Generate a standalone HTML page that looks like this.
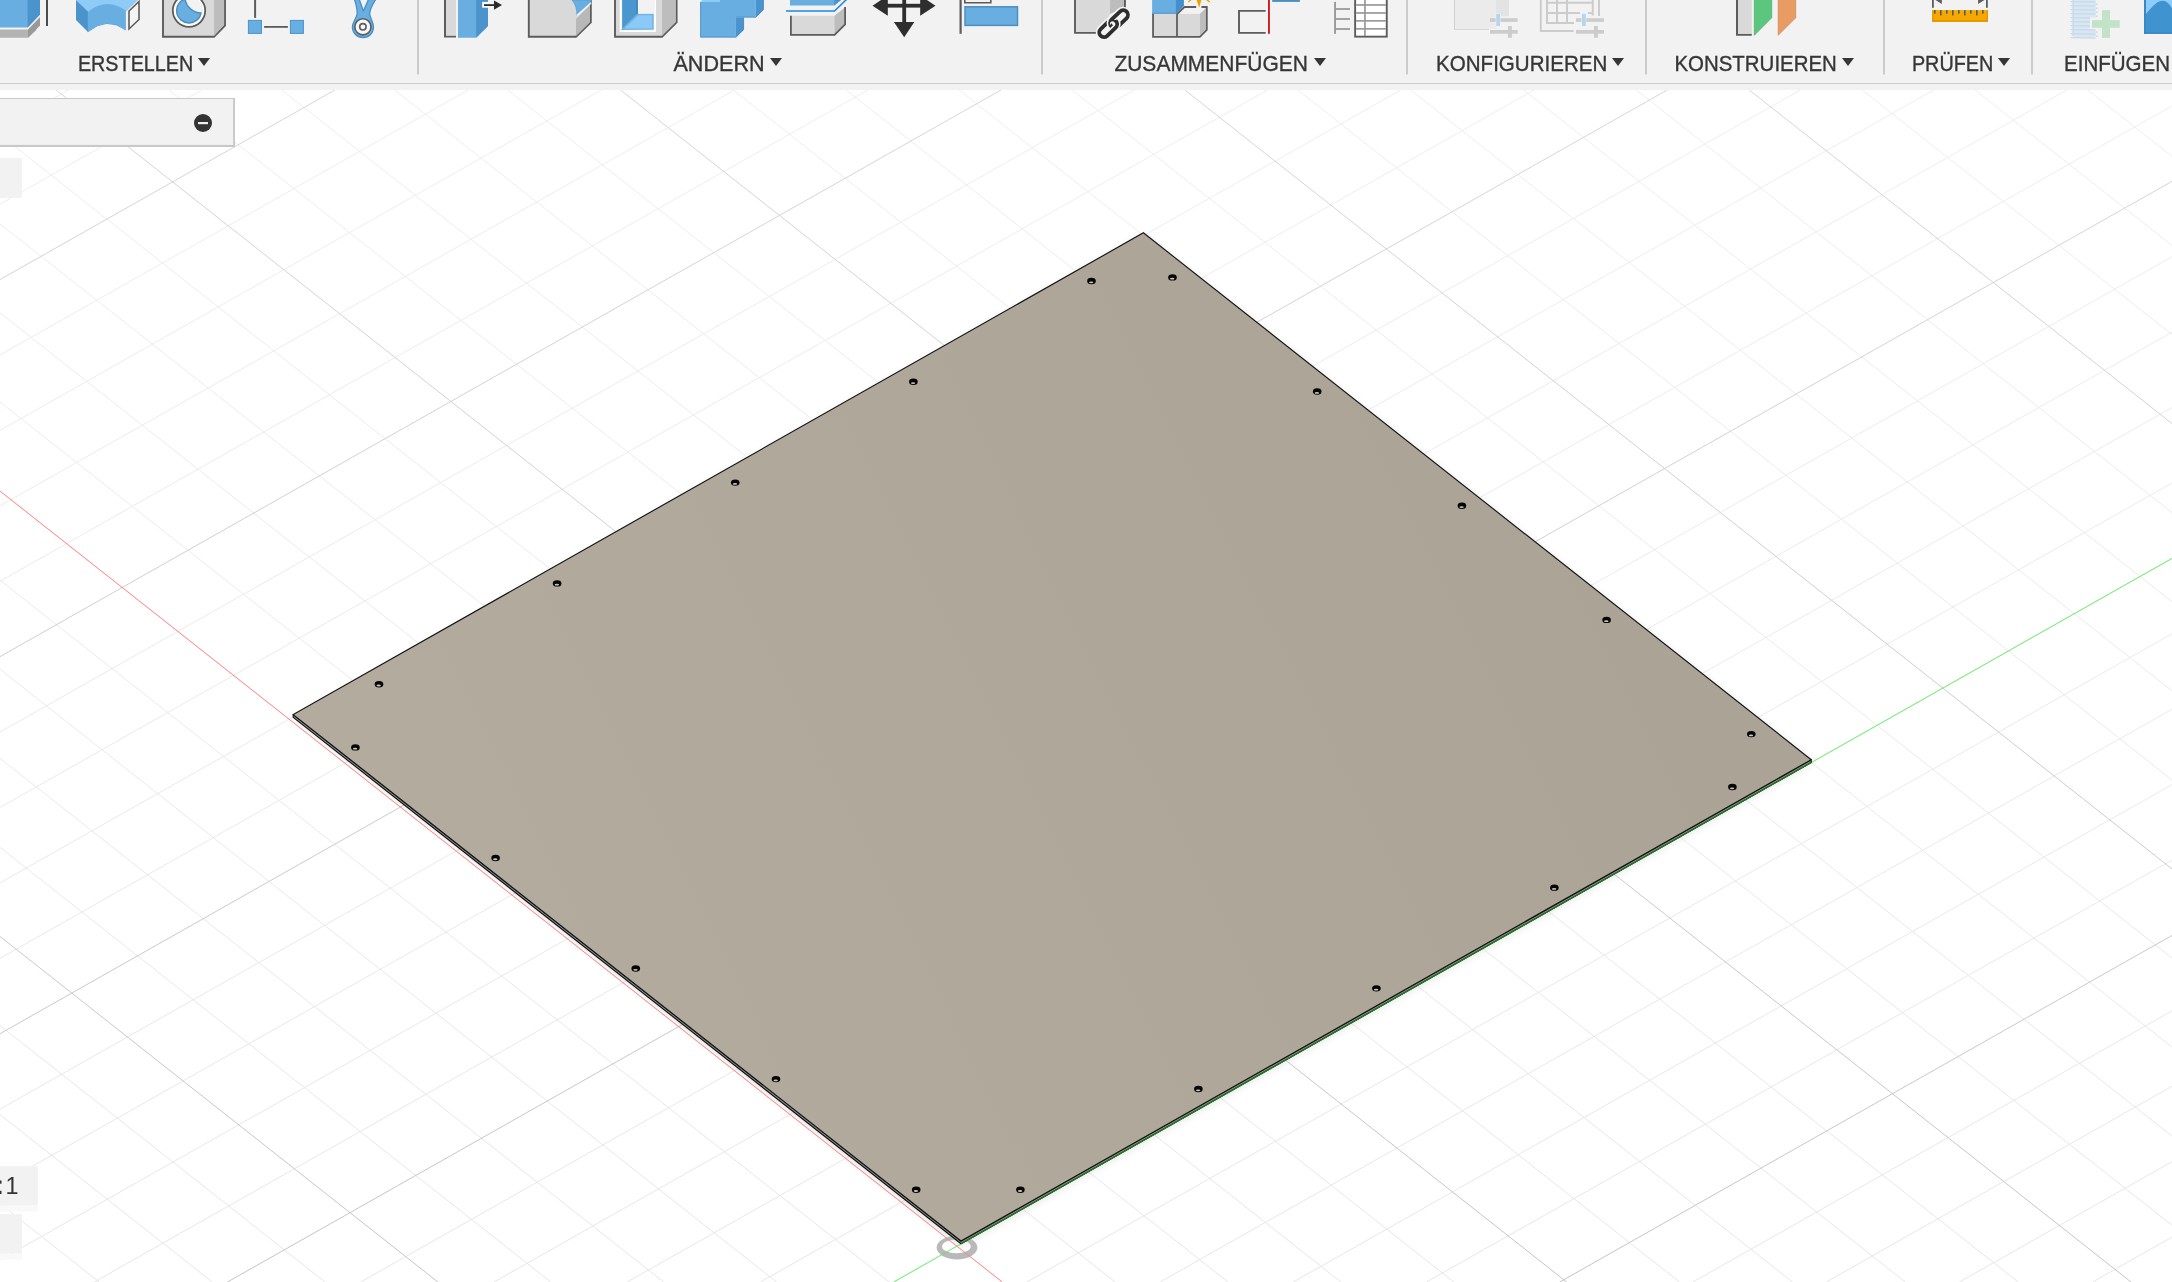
<!DOCTYPE html><html><head><meta charset="utf-8"><title>Fusion</title><style>html,body{margin:0;padding:0;width:2172px;height:1282px;overflow:hidden;background:#fff;font-family:"Liberation Sans",sans-serif}</style></head><body><svg width="2172" height="1282" viewBox="0 0 2172 1282" style="position:absolute;left:0;top:0;display:block"><defs><linearGradient id="plateg" gradientUnits="userSpaceOnUse" x1="500" y1="1000" x2="1600" y2="450"><stop offset="0" stop-color="#b3ab9e"/><stop offset="0.5" stop-color="#afa799"/><stop offset="1" stop-color="#aba395"/></linearGradient><linearGradient id="gminor" gradientUnits="userSpaceOnUse" x1="0" y1="90" x2="0" y2="1282"><stop offset="0" stop-color="#eeeeee"/><stop offset="1" stop-color="#e6e6e6"/></linearGradient><linearGradient id="gmajor" gradientUnits="userSpaceOnUse" x1="0" y1="90" x2="0" y2="1282"><stop offset="0" stop-color="#d6d6d6"/><stop offset="1" stop-color="#c4c4c4"/></linearGradient><filter id="ringblur" x="-20%" y="-40%" width="140%" height="180%"><feGaussianBlur stdDeviation="0.6"/></filter><filter id="blur1" x="-10%" y="-10%" width="120%" height="120%"><feGaussianBlur stdDeviation="1.2"/></filter><filter id="blur" x="-10%" y="-10%" width="120%" height="120%"><feGaussianBlur stdDeviation="4"/></filter></defs><rect x="0" y="0" width="2172" height="1282" fill="#ffffff"/><path d="M0.00 1203.67L99.26 1282.00 M-0.00 1114.59L212.14 1282.00 M0.00 1025.52L325.01 1282.00 M0.00 847.37L550.76 1282.00 M0.00 758.30L663.64 1282.00 M0.00 669.22L776.51 1282.00 M0.00 580.15L889.39 1282.00 M0.00 402.00L1115.14 1282.00 M0.00 312.92L1228.02 1282.00 M0.00 223.85L1340.89 1282.00 M0.00 134.77L1453.77 1282.00 M169.01 90.00L1679.52 1282.00 M281.89 90.00L1792.40 1282.00 M394.76 90.00L1905.27 1282.00 M507.64 90.00L2018.15 1282.00 M733.39 90.00L2172.00 1225.26 M846.27 90.00L2172.00 1136.19 M959.14 90.00L2172.00 1047.11 M1072.02 90.00L2172.00 958.04 M1297.77 90.00L2172.00 779.89 M1410.64 90.00L2172.00 690.82 M1523.52 90.00L2172.00 601.74 M1636.39 90.00L2172.00 512.67 M1862.15 90.00L2172.00 334.52 M1975.02 90.00L2172.00 245.44 M2087.90 90.00L2172.00 156.37 M0.00 128.75L68.46 90.00 M0.00 204.17L201.69 90.00 M0.00 354.99L468.14 90.00 M0.00 430.41L601.37 90.00 M0.00 505.82L734.59 90.00 M0.00 581.24L867.82 90.00 M0.00 732.07L1134.27 90.00 M0.00 807.48L1267.50 90.00 M0.00 882.89L1400.72 90.00 M0.00 958.31L1533.95 90.00 M0.00 1109.14L1800.40 90.00 M0.00 1184.55L1933.63 90.00 M0.00 1259.96L2066.85 90.00 M94.30 1282.00L2172.00 105.90 M360.75 1282.00L2172.00 256.72 M493.98 1282.00L2172.00 332.14 M627.20 1282.00L2172.00 407.55 M760.43 1282.00L2172.00 482.97 M1026.88 1282.00L2172.00 633.79 M1160.11 1282.00L2172.00 709.21 M1293.33 1282.00L2172.00 784.62 M1426.56 1282.00L2172.00 860.04 M1693.01 1282.00L2172.00 1010.87 M1826.24 1282.00L2172.00 1086.28 M1959.47 1282.00L2172.00 1161.69 M2092.69 1282.00L2172.00 1237.11" stroke="url(#gminor)" stroke-width="1" fill="none"/><path d="M0.00 936.45L437.89 1282.00 M56.14 90.00L1566.64 1282.00 M620.51 90.00L2131.02 1282.00 M1184.89 90.00L2172.00 868.96 M1749.27 90.00L2172.00 423.59 M0.00 279.58L334.91 90.00 M0.00 656.65L1001.04 90.00 M0.00 1033.72L1667.18 90.00 M227.52 1282.00L2172.00 181.31 M1559.79 1282.00L2172.00 935.45" stroke="url(#gmajor)" stroke-width="1" fill="none"/><line x1="-0.00" y1="491.07" x2="1002.27" y2="1282.00" stroke="#ff7070" stroke-opacity="0.55" stroke-width="1"/><line x1="893.66" y1="1282.00" x2="2172.00" y2="558.38" stroke="#50e850" stroke-opacity="0.55" stroke-width="1"/><polygon points="295.20,717.60 961.00,1246.00 1813.20,762.70 1143.40,234.80" fill="#000" opacity="0.10" filter="url(#blur)"/><polygon points="292.20,716.60 960.00,1244.00 964.00,1249.00 296.20,721.60" fill="#000" opacity="0.06" filter="url(#blur1)"/><path d="M936.6,1247.6 A20.4,11.8 0 1 0 977.4,1247.6 A20.4,11.8 0 1 0 936.6,1247.6 Z M942.1,1246.4 A14.3,6.9 0 1 1 970.7,1246.4 A14.3,6.9 0 1 1 942.1,1246.4 Z" fill="#b9b9b9" fill-rule="evenodd" filter="url(#ringblur)"/><line x1="-0.00" y1="491.07" x2="1002.27" y2="1282.00" stroke="#ff7070" stroke-opacity="0.55" stroke-width="1"/><line x1="893.66" y1="1282.00" x2="2172.00" y2="558.38" stroke="#50e850" stroke-opacity="0.55" stroke-width="1"/><polygon points="293.20,714.60 961.00,1241.00 1811.20,759.70 1811.20,762.50 961.00,1243.80 293.20,717.40" fill="#8a8a8a" stroke="#111" stroke-width="1.1" stroke-linejoin="round"/><line x1="961.00" y1="1243.80" x2="1811.20" y2="762.50" stroke="#1f7f1f" stroke-width="1.2"/><polygon points="1143.40,232.80 1811.20,759.70 961.00,1241.00 293.20,714.60" fill="url(#plateg)" stroke="#141414" stroke-width="1.15" stroke-linejoin="miter"/><ellipse cx="1091.50" cy="281.00" rx="4.3" ry="3.2" fill="#050505"/><ellipse cx="1091.20" cy="282.30" rx="2.2" ry="0.9" fill="#c9c6c0"/><ellipse cx="913.38" cy="381.80" rx="4.3" ry="3.2" fill="#050505"/><ellipse cx="913.08" cy="383.10" rx="2.2" ry="0.9" fill="#c9c6c0"/><ellipse cx="735.25" cy="482.60" rx="4.3" ry="3.2" fill="#050505"/><ellipse cx="734.95" cy="483.90" rx="2.2" ry="0.9" fill="#c9c6c0"/><ellipse cx="557.12" cy="583.40" rx="4.3" ry="3.2" fill="#050505"/><ellipse cx="556.83" cy="584.70" rx="2.2" ry="0.9" fill="#c9c6c0"/><ellipse cx="379.00" cy="684.20" rx="4.3" ry="3.2" fill="#050505"/><ellipse cx="378.70" cy="685.50" rx="2.2" ry="0.9" fill="#c9c6c0"/><ellipse cx="1172.50" cy="277.40" rx="4.3" ry="3.2" fill="#050505"/><ellipse cx="1172.20" cy="278.70" rx="2.2" ry="0.9" fill="#c9c6c0"/><ellipse cx="1317.20" cy="391.57" rx="4.3" ry="3.2" fill="#050505"/><ellipse cx="1316.90" cy="392.88" rx="2.2" ry="0.9" fill="#c9c6c0"/><ellipse cx="1461.90" cy="505.75" rx="4.3" ry="3.2" fill="#050505"/><ellipse cx="1461.60" cy="507.05" rx="2.2" ry="0.9" fill="#c9c6c0"/><ellipse cx="1606.60" cy="619.92" rx="4.3" ry="3.2" fill="#050505"/><ellipse cx="1606.30" cy="621.22" rx="2.2" ry="0.9" fill="#c9c6c0"/><ellipse cx="1751.30" cy="734.10" rx="4.3" ry="3.2" fill="#050505"/><ellipse cx="1751.00" cy="735.40" rx="2.2" ry="0.9" fill="#c9c6c0"/><ellipse cx="355.40" cy="747.40" rx="4.3" ry="3.2" fill="#050505"/><ellipse cx="355.10" cy="748.70" rx="2.2" ry="0.9" fill="#c9c6c0"/><ellipse cx="495.60" cy="857.98" rx="4.3" ry="3.2" fill="#050505"/><ellipse cx="495.30" cy="859.27" rx="2.2" ry="0.9" fill="#c9c6c0"/><ellipse cx="635.80" cy="968.55" rx="4.3" ry="3.2" fill="#050505"/><ellipse cx="635.50" cy="969.85" rx="2.2" ry="0.9" fill="#c9c6c0"/><ellipse cx="776.00" cy="1079.12" rx="4.3" ry="3.2" fill="#050505"/><ellipse cx="775.70" cy="1080.42" rx="2.2" ry="0.9" fill="#c9c6c0"/><ellipse cx="916.20" cy="1189.70" rx="4.3" ry="3.2" fill="#050505"/><ellipse cx="915.90" cy="1191.00" rx="2.2" ry="0.9" fill="#c9c6c0"/><ellipse cx="1020.40" cy="1189.70" rx="4.3" ry="3.2" fill="#050505"/><ellipse cx="1020.10" cy="1191.00" rx="2.2" ry="0.9" fill="#c9c6c0"/><ellipse cx="1198.40" cy="1089.03" rx="4.3" ry="3.2" fill="#050505"/><ellipse cx="1198.10" cy="1090.33" rx="2.2" ry="0.9" fill="#c9c6c0"/><ellipse cx="1376.40" cy="988.35" rx="4.3" ry="3.2" fill="#050505"/><ellipse cx="1376.10" cy="989.65" rx="2.2" ry="0.9" fill="#c9c6c0"/><ellipse cx="1554.40" cy="887.67" rx="4.3" ry="3.2" fill="#050505"/><ellipse cx="1554.10" cy="888.97" rx="2.2" ry="0.9" fill="#c9c6c0"/><ellipse cx="1732.40" cy="787.00" rx="4.3" ry="3.2" fill="#050505"/><ellipse cx="1732.10" cy="788.30" rx="2.2" ry="0.9" fill="#c9c6c0"/><rect x="0" y="98" width="235" height="49" fill="#c8c8c8"/><rect x="0" y="99" width="233.1" height="45.9" fill="#f2f2f2"/><circle cx="203" cy="123" r="9" fill="#333"/><rect x="198" y="122" width="10" height="2.2" fill="#f0f0f0"/><rect x="0" y="158" width="21.8" height="40" fill="#f2f2f2"/><rect x="0" y="1166.2" width="37.8" height="39.4" fill="#f2f2f2"/><rect x="0" y="1205.6" width="37.8" height="6" fill="#f9f9f9"/><rect x="0" y="1214.2" width="21.9" height="39.5" fill="#f2f2f2"/><rect x="0" y="1253.7" width="21.9" height="6" fill="#f9f9f9"/><g opacity="0.999"><text x="5.4" y="1194.1" font-family="Liberation Sans" font-size="23.4" fill="#333">1</text></g><rect x="-1" y="1180.5" width="2.5" height="3.2" fill="#333"/><rect x="-1" y="1190.8" width="2.5" height="3.2" fill="#333"/><rect x="0" y="0" width="2172" height="90" fill="#f2f2f2"/><rect x="0" y="83" width="2172" height="1" fill="#cacaca"/><rect x="417" y="0" width="2" height="74.5" fill="#cbcbcb"/><rect x="1041" y="0" width="2" height="74.5" fill="#cbcbcb"/><rect x="1406" y="0" width="2" height="74.5" fill="#cbcbcb"/><rect x="1645" y="0" width="2" height="74.5" fill="#cbcbcb"/><rect x="1883" y="0" width="2" height="74.5" fill="#cbcbcb"/><rect x="2031" y="0" width="2" height="74.5" fill="#cbcbcb"/><g opacity="0.999"><text x="77.9" y="71.2" textLength="115.4" lengthAdjust="spacingAndGlyphs" font-family="Liberation Sans" font-size="22.7" fill="#363636" stroke="#363636" stroke-width="0.35">ERSTELLEN</text><polygon points="198.00,58.00 210.00,58.00 204.00,66.00" fill="#363636"/><text x="673.4" y="71.2" textLength="91.2" lengthAdjust="spacingAndGlyphs" font-family="Liberation Sans" font-size="22.7" fill="#363636" stroke="#363636" stroke-width="0.35">ÄNDERN</text><polygon points="770.00,58.00 782.00,58.00 776.00,66.00" fill="#363636"/><text x="1114.4" y="71.2" textLength="193.6" lengthAdjust="spacingAndGlyphs" font-family="Liberation Sans" font-size="22.7" fill="#363636" stroke="#363636" stroke-width="0.35">ZUSAMMENFÜGEN</text><polygon points="1314.00,58.00 1326.00,58.00 1320.00,66.00" fill="#363636"/><text x="1436.1" y="71.2" textLength="171.2" lengthAdjust="spacingAndGlyphs" font-family="Liberation Sans" font-size="22.7" fill="#363636" stroke="#363636" stroke-width="0.35">KONFIGURIEREN</text><polygon points="1612.00,58.00 1624.00,58.00 1618.00,66.00" fill="#363636"/><text x="1674.4" y="71.2" textLength="162.5" lengthAdjust="spacingAndGlyphs" font-family="Liberation Sans" font-size="22.7" fill="#363636" stroke="#363636" stroke-width="0.35">KONSTRUIEREN</text><polygon points="1842.00,58.00 1854.00,58.00 1848.00,66.00" fill="#363636"/><text x="1911.9" y="71.2" textLength="81.5" lengthAdjust="spacingAndGlyphs" font-family="Liberation Sans" font-size="22.7" fill="#363636" stroke="#363636" stroke-width="0.35">PRÜFEN</text><polygon points="1998.00,58.00 2010.00,58.00 2004.00,66.00" fill="#363636"/><text x="2064.0" y="71.2" textLength="106.0" lengthAdjust="spacingAndGlyphs" font-family="Liberation Sans" font-size="22.7" fill="#363636" stroke="#363636" stroke-width="0.35">EINFÜGEN</text></g><polygon points="0,29.5 37,29.5 28,37.8 0,37.8" fill="#b3b3b3"/><polygon points="28,37.8 40,25.5 40,17 28,29.5" fill="#999"/><polygon points="0,0 40,0 40,14.5 27.6,27.6 0,27.6" fill="#68aee0"/><polygon points="27.6,0 40,0 40,14.5 27.6,27.6" fill="#4a93cc"/><rect x="46.2" y="0" width="1.6" height="26" fill="#222"/><path d="M76,0 L138,0 L126,11.5 L88,11.5 Z" fill="#8ecbf7"/><path d="M76,0 L88,11.5 L88,32 L76,20 Z" fill="#4a93cc"/><path d="M87.8,11.7 Q107,-3.3 125.9,10.7 L125.9,30 Q107,16 87.8,31.8 Z" fill="#68aee0"/><path d="M125.9,30 Q107,16 87.8,31.8" fill="none" stroke="#5a9fd6" stroke-width="0.9"/><path d="M129,11 L139,1.5 L139,19.5 L129,29 Z" fill="#f4f4f4" stroke="#5c5c5c" stroke-width="1.6"/><path d="M163,-1 L163,36.8 L214,36.8 L225,25.5 L225,-1" fill="#d9d9d9" stroke="#5c5c5c" stroke-width="1.9"/><polygon points="214,0 224.1,0 224.1,25.1 214,35.9" fill="#bdbdbd"/><circle cx="189" cy="10.6" r="16.2" fill="#fff" stroke="#5c5c5c" stroke-width="1.8"/><clipPath id="rvclip"><circle cx="189" cy="10.6" r="14.1"/></clipPath><circle cx="201.5" cy="-3.8" r="16.4" fill="#f2f2f2" clip-path="url(#rvclip)"/><path d="M184.94,-1.01 A12.3,12.3 0 1 0 201.06,13.0 A16.8,16.8 0 0 1 184.94,-1.01 Z" fill="#68aee0" stroke="#4a8fc2" stroke-width="1.4"/><rect x="254.1" y="0" width="2" height="17.9" fill="#5c5c5c"/><rect x="248.4" y="20.4" width="13" height="13" fill="#68aee0" stroke="#4a93cc" stroke-width="1"/><rect x="290.4" y="20.4" width="13" height="13" fill="#68aee0" stroke="#4a93cc" stroke-width="1"/><rect x="264.1" y="26" width="23.8" height="1.8" fill="#5c5c5c"/><path d="M354.3,-1 C356,4 357.5,9 357.1,14 C356.7,18 352.4,22 352.4,27 C352.4,33 357,37.6 363.1,37.6 C369,37.6 373.5,33 373.5,27 C373.5,22 369.9,18 369.7,14 C369.6,9 372.8,4 375.9,-1 L368.7,-1 L363.4,11 L359.1,-1 Z" fill="#68aee0" stroke="#4a8fc2" stroke-width="1.3" stroke-linejoin="round"/><circle cx="362.9" cy="26.8" r="8.1" fill="#f6f6f6" stroke="#5c5c5c" stroke-width="1.6"/><circle cx="362.9" cy="26.8" r="3.2" fill="none" stroke="#5c5c5c" stroke-width="1.6"/><path d="M445,0 L445,36.6 L456,36.6" fill="none" stroke="#5c5c5c" stroke-width="2"/><rect x="446" y="0" width="10" height="35.6" fill="#d9d9d9"/><polygon points="458,0 488,0 488,26 476.2,37.7 458,37.7" fill="#68aee0"/><polygon points="476.2,0 488,0 488,26 476.2,37.7" fill="#4a93cc"/><rect x="482.2" y="1.9" width="6.5" height="5.8" fill="#fff"/><rect x="484" y="4.2" width="11" height="1.8" fill="#2a2a2a"/><polygon points="494,0.6 502,5.1 494,9.7" fill="#2a2a2a"/><path d="M528.8,0 L528.8,36.8 L576,36.8 L590.8,22.3 L590.8,0" fill="#d9d9d9" stroke="#5c5c5c" stroke-width="1.9"/><polygon points="576,19 590,5 590,22.3 576,36" fill="#b8b8b8"/><path d="M572,0 L591,0 L591,3 L577,15.5 Q577,6 572,0 Z" fill="#68aee0" stroke="#4a93cc" stroke-width="0.6"/><path d="M577,15.5 L591,3" stroke="#fff" stroke-width="1.4"/><path d="M615,-1 L615,36.8 L662,36.8 L676.6,22.3 L676.6,-1" fill="#d9d9d9" stroke="#5c5c5c" stroke-width="1.9"/><polygon points="662,0 675.6,0 675.6,21.9 662,35.8" fill="#bdbdbd"/><rect x="620.4" y="-2" width="35" height="33.4" fill="#f2f2f2" stroke="#fff" stroke-width="1.3"/><path d="M621.6,-1 L638.4,-1 L638.4,13.2 L654.6,13.2 L654.6,30.4 L621.6,30.4 Z" fill="#fff"/><polygon points="622.1,0 637.8,0 637.8,13.8 622.1,29.5" fill="#4a96cf"/><rect x="636.3" y="0" width="1.5" height="14.5" fill="#3a84bd"/><polygon points="622.6,29.2 637.8,14.6 653.0,14.6 653.0,29.0" fill="#8ac9f8" stroke="#74b2e0" stroke-width="1.5"/><polygon points="700.2,2.1 720,2.1 720,0 755.8,0 755.8,17.5 735.9,17.5 735.9,37.6 700.2,37.6" fill="#68aee0"/><polygon points="700.2,2.1 702.5,0 720,0 720,2.1" fill="#8ecbf7"/><polygon points="755.8,0 763.7,0 763.7,9.7 755.8,17.6" fill="#4994cf"/><polygon points="735.9,17.5 743.9,17.5 743.9,29.7 735.9,37.6" fill="#4994cf"/><path d="M700.6,2.1 L700.6,37.1 L736,37.1 L743.6,29.6 M736,17.1 L755.8,17.1 L763.4,9.6 M763.4,0 L763.4,9.6 M743.6,17.5 L743.6,29.6" fill="none" stroke="#3f86c0" stroke-width="0.9" stroke-opacity="0.7"/><polygon points="790,0 834,0 841,0 834.2,5.6 790,5.6" fill="#68aee0"/><polygon points="834.2,0 841,0 834.2,5.6" fill="#4a93cc"/><polygon points="790,15.8 834.6,15.8 845.6,7 845.6,24.3 834.6,35.2 790,35.2" fill="#d9d9d9"/><polygon points="834.6,15.8 845.6,7 845.6,24.3 834.6,35.2" fill="#bdbdbd"/><path d="M786,11 L834.5,11 L846.5,-0.5" fill="none" stroke="#1a8ae6" stroke-width="1.6"/><path d="M790.9,15.8 L790.9,34.9 L834.6,34.9 L845.1,24.3 L845.1,7" fill="none" stroke="#5c5c5c" stroke-width="1.8"/><rect x="902.3" y="-1" width="3.8" height="25" fill="#2e2e2e"/><rect x="886" y="3.8" width="36" height="3.8" fill="#2e2e2e"/><polygon points="872.5,5.7 887.8,-4.5 887.8,15.8" fill="#2e2e2e"/><polygon points="935.5,5.7 920.2,-4.5 920.2,15.8" fill="#2e2e2e"/><polygon points="893.9,22 914.3,22 904.2,37.3" fill="#2e2e2e"/><rect x="959.5" y="0" width="2.2" height="33.8" fill="#5c5c5c"/><path d="M964.8,-1 L964.8,2.7 L990.8,2.7 L990.8,-1" fill="none" stroke="#5c5c5c" stroke-width="1.6"/><rect x="965" y="6.8" width="52.5" height="18.6" fill="#68aee0" stroke="#4d8dc2" stroke-width="1.5"/><path d="M1075,-1 L1075,32.9 L1100,32.9" fill="none" stroke="#5c5c5c" stroke-width="1.9"/><polygon points="1076,0 1110,0 1110,14 1100,32 1076,32" fill="#d9d9d9"/><polygon points="1110,0 1124,0 1124,8 1110,14" fill="#bdbdbd"/><rect x="1124" y="0" width="1.9" height="8.7" fill="#5c5c5c"/><g transform="translate(1108.20,28.30) rotate(-44)"><rect x="-10.6" y="-4.7" width="21.2" height="9.4" rx="4.7" fill="none" stroke="#f4f4f4" stroke-width="7"/><rect x="-10.6" y="-4.7" width="21.2" height="9.4" rx="4.7" fill="none" stroke="#2e2e2e" stroke-width="3.8"/></g><g transform="translate(1119.00,19.00) rotate(-44)"><rect x="-10.6" y="-4.7" width="21.2" height="9.4" rx="4.7" fill="none" stroke="#f4f4f4" stroke-width="7"/><rect x="-10.6" y="-4.7" width="21.2" height="9.4" rx="4.7" fill="none" stroke="#2e2e2e" stroke-width="3.8"/></g><clipPath id="lnkclip"><rect x="1110" y="20" width="12" height="12"/></clipPath><g clip-path="url(#lnkclip)"><g transform="translate(1108.2,28.3) rotate(-44)"><rect x="-10.6" y="-4.7" width="21.2" height="9.4" rx="4.7" fill="none" stroke="#f4f4f4" stroke-width="7"/><rect x="-10.6" y="-4.7" width="21.2" height="9.4" rx="4.7" fill="none" stroke="#2e2e2e" stroke-width="3.8"/></g></g><polygon points="1152.1,0 1183.8,0 1183.8,5.8 1175.9,13.9 1152.1,13.9" fill="#68aee0"/><polygon points="1175.9,0 1183.8,0 1183.8,5.8 1175.9,13.9" fill="#4590cc"/><rect x="1152.1" y="12.6" width="24" height="1.3" fill="#5a98cf"/><polygon points="1177.9,13.9 1184.6,8.1 1205.9,8.1 1199.8,13.9" fill="#f2f2f2"/><rect x="1154" y="13.9" width="22.1" height="22.2" fill="#d9d9d9"/><rect x="1177.9" y="13.9" width="21.9" height="22.2" fill="#d9d9d9"/><polygon points="1199.8,13.9 1205.9,8.1 1205.9,29.3 1199.8,35.5" fill="#bdbdbd"/><path d="M1153.05,13.9 L1153.05,36.9 L1199.9,36.9 L1206.8,29.9 L1206.8,7.0 L1201.4,7.0 M1196.2,7.0 L1184.4,7.0 L1177,14.2 L1177,36" fill="none" stroke="#5c5c5c" stroke-width="1.8"/><path d="M1196.6,0 L1201.4,0 L1199.2,7.7 Z" fill="#f0a000"/><path d="M1188.2,1.9 L1190.4,0 L1191.2,0 Z" fill="#f0a000" stroke="#f0a000" stroke-width="1"/><path d="M1209.8,1.9 L1207.4,0 L1206.6,0 Z" fill="#f0a000" stroke="#f0a000" stroke-width="1"/><path d="M1265.7,10.9 L1239,10.9 L1239,32.9 L1265.7,32.9" fill="none" stroke="#5c5c5c" stroke-width="1.9"/><rect x="1268" y="0" width="1.9" height="33.8" fill="#d11a22"/><rect x="1272.2" y="0" width="27.7" height="1.9" fill="#4a8ec4"/><rect x="1334.1" y="1.9" width="1.9" height="31.9" fill="#9a9a9a"/><rect x="1336" y="8.1" width="14" height="1.8" fill="#9a9a9a"/><rect x="1336" y="18.1" width="14" height="1.8" fill="#9a9a9a"/><rect x="1336" y="28.1" width="14" height="1.8" fill="#9a9a9a"/><rect x="1355.15" y="-2" width="31.6" height="38.65" fill="#fff" stroke="#5c5c5c" stroke-width="1.9"/><rect x="1364.1" y="0" width="1.7" height="36" fill="#9a9a9a"/><rect x="1356.1" y="4.1" width="29.7" height="1.7" fill="#9a9a9a"/><rect x="1356.1" y="12.1" width="29.7" height="1.7" fill="#9a9a9a"/><rect x="1356.1" y="20.0" width="29.7" height="1.7" fill="#9a9a9a"/><rect x="1356.1" y="28.0" width="29.7" height="1.7" fill="#9a9a9a"/><path d="M1454.5,0 L1454.5,29.3 L1489,29.3" fill="none" stroke="#d0d0d0" stroke-width="1.1"/><rect x="1455" y="0" width="41" height="28.8" fill="#ebebeb"/><path d="M1496,0 L1509,0 L1509,15 Q1509,16.6 1507.5,16.6 L1496,16.6 Z" fill="#e3e3e3"/><rect x="1490" y="18.2" width="27.7" height="3.7" fill="#cccccc"/><rect x="1495.6" y="13.2" width="4.8" height="13.4" fill="#f2f2f2"/><rect x="1496.2" y="13.8" width="3.8" height="12.2" fill="#b5d5ee"/><rect x="1490" y="30" width="27.7" height="3.7" fill="#cccccc"/><rect x="1508" y="26" width="3.9" height="11.8" fill="#cccccc"/><path d="M1540.8,0 L1540.8,31 L1573.5,31" fill="none" stroke="#cccccc" stroke-width="2"/><path d="M1547,0 L1547,23 L1574,23 M1546,2.8 L1592.5,2.8 M1546,13 L1580,13 M1588,13 L1592,13 M1557,0 L1557,23 M1567,0 L1567,23 M1592.8,0 L1592.8,15.5 M1599,0 L1599,16" fill="none" stroke="#cccccc" stroke-width="2"/><rect x="1576" y="18.2" width="28" height="3.7" fill="#cccccc"/><rect x="1581.4" y="13.2" width="4.8" height="13.4" fill="#f2f2f2"/><rect x="1582" y="13.8" width="3.8" height="12.2" fill="#b5d5ee"/><rect x="1576" y="30" width="28" height="3.7" fill="#cccccc"/><rect x="1594" y="26" width="3.9" height="11.8" fill="#cccccc"/><path d="M1737,0 L1737,34.8 L1751.8,34.8" fill="none" stroke="#5c5c5c" stroke-width="2"/><rect x="1738" y="0" width="13.8" height="33.8" fill="#d9d9d9"/><polygon points="1754.3,-1 1771.7,-1 1771.7,17.8 1754.3,35.3" fill="#5bc67d" stroke="#4aab69" stroke-width="0.7"/><polygon points="1778.2,-1 1795.7,-1 1795.7,17.8 1778.2,35.3" fill="#e89c64" stroke="#d0854f" stroke-width="0.7"/><rect x="1932.2" y="10.1" width="55.8" height="11.7" fill="#f5a800"/><rect x="1932.2" y="20.2" width="55.8" height="1.6" fill="#e49400"/><rect x="1934.0" y="10.1" width="1.6" height="3.5" fill="#5a5a5a"/><rect x="1940.0" y="10.1" width="1.6" height="5.3" fill="#5a5a5a"/><rect x="1946.0" y="10.1" width="1.6" height="3.5" fill="#5a5a5a"/><rect x="1952.0" y="10.1" width="1.6" height="5.3" fill="#5a5a5a"/><rect x="1958.0" y="10.1" width="1.6" height="3.5" fill="#5a5a5a"/><rect x="1964.0" y="10.1" width="1.6" height="5.3" fill="#5a5a5a"/><rect x="1970.0" y="10.1" width="1.6" height="3.5" fill="#5a5a5a"/><rect x="1976.0" y="10.1" width="1.6" height="5.3" fill="#5a5a5a"/><rect x="1982.0" y="10.1" width="1.6" height="3.5" fill="#5a5a5a"/><rect x="1932" y="0" width="1.8" height="7.8" fill="#5c5c5c"/><rect x="1986" y="0" width="1.8" height="7.8" fill="#5c5c5c"/><polygon points="1935.5,0 1941.8,0 1941.8,3.9" fill="#5c5c5c"/><polygon points="1984.4,0 1978.1,0 1978.1,3.9" fill="#5c5c5c"/><rect x="1932.2" y="10.1" width="1.4" height="11.7" fill="#e49a00"/><rect x="1986.6" y="10.1" width="1.4" height="11.7" fill="#e49a00"/><path d="M2072.4,0 L2095.6,0 L2095.6,17.6 L2090,17.6 L2090,30.4 L2095.6,30.4 L2095.6,35.8 L2093,37.8 L2075,37.8 L2072.4,35.8 Z" fill="#d9e7f3"/><path d="M2070.3,1.6 L2095.6,2.0" stroke="#c9dae8" stroke-width="1.4"/><rect x="2095.6" y="3.5" width="2.2" height="1.4" fill="#c9dae8"/><path d="M2070.3,5.6 L2095.6,6.0" stroke="#c9dae8" stroke-width="1.4"/><rect x="2095.6" y="7.5" width="2.2" height="1.4" fill="#c9dae8"/><path d="M2070.3,9.6 L2095.6,10.0" stroke="#c9dae8" stroke-width="1.4"/><rect x="2095.6" y="11.5" width="2.2" height="1.4" fill="#c9dae8"/><path d="M2070.3,13.6 L2095.6,14.0" stroke="#c9dae8" stroke-width="1.4"/><rect x="2095.6" y="15.5" width="2.2" height="1.4" fill="#c9dae8"/><path d="M2070.3,17.6 L2090.0,18.0" stroke="#c9dae8" stroke-width="1.4"/><path d="M2070.3,21.6 L2090.0,22.0" stroke="#c9dae8" stroke-width="1.4"/><path d="M2070.3,25.6 L2090.0,26.0" stroke="#c9dae8" stroke-width="1.4"/><path d="M2070.3,29.6 L2095.6,30.0" stroke="#c9dae8" stroke-width="1.4"/><rect x="2095.6" y="31.5" width="2.2" height="1.4" fill="#c9dae8"/><path d="M2070.3,33.6 L2095.6,34.0" stroke="#c9dae8" stroke-width="1.4"/><rect x="2095.6" y="35.5" width="2.2" height="1.4" fill="#c9dae8"/><path d="M2070.3,37.6 L2095.6,38.0" stroke="#c9dae8" stroke-width="1.4"/><rect x="2072.4" y="0" width="1.6" height="36" fill="#cddcea"/><rect x="2092" y="20.1" width="27.8" height="7.7" fill="#c3e3c9"/><rect x="2102" y="10.1" width="8" height="27.8" fill="#c3e3c9"/><rect x="2144" y="0" width="28" height="33.8" fill="#3f93cf"/><path d="M2146,0 L2172,0 L2172,8.3 Q2167,-1 2160.6,1 Q2155,2.5 2146,13.9 Z" fill="#8ccdfb"/><rect x="2144" y="0" width="1.8" height="33.8" fill="#3a86c4"/><rect x="2144" y="32.3" width="28" height="1.5" fill="#3a86c4"/></svg></body></html>
